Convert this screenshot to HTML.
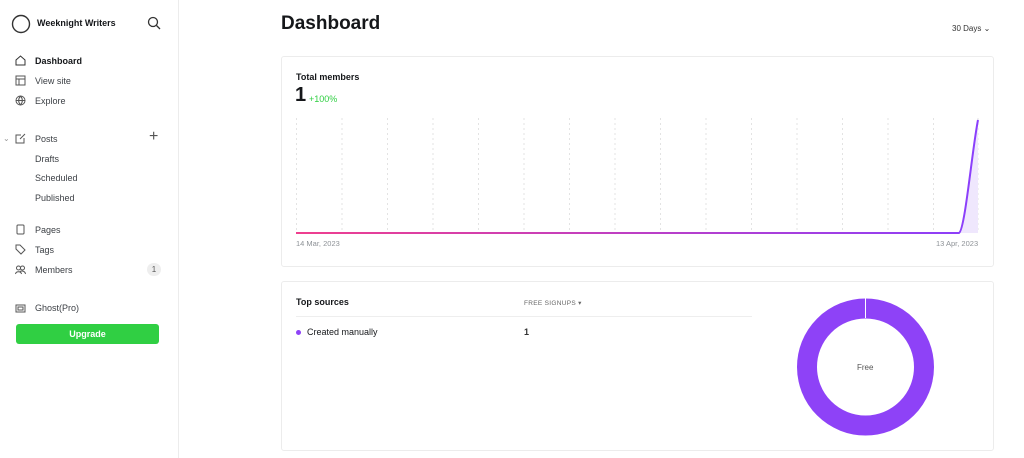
<!DOCTYPE html>
<html><head><style>
*{box-sizing:border-box;margin:0;padding:0}
body{width:1024px;height:458px;overflow:hidden;background:#fff;font-family:"Liberation Sans",sans-serif;color:#15171a;position:relative}
.sb{position:absolute;left:0;top:0;width:179px;height:458px;border-right:1px solid #ececec}
.t{position:absolute;font-size:9px;color:#3b3f44}
.ic{position:absolute}
.card{position:absolute;left:281px;width:713px;border:1px solid #ececec;border-radius:3px}
</style></head><body>
<div class="sb">
<svg class="ic" style="left:11px;top:14px" width="20" height="20"><circle cx="10" cy="10" r="8.5" fill="none" stroke="#333" stroke-width="1.4"/></svg>
<div class="t" style="left:37px;top:18px;font-weight:bold;color:#15171a">Weeknight Writers</div>
<svg class="ic" style="left:147px;top:16px" width="14" height="14"><circle cx="6" cy="6" r="4.5" fill="none" stroke="#333" stroke-width="1.3"/><path d="M9.5 9.5L13 13" stroke="#333" stroke-width="1.3"/></svg>
<svg class="ic" style="left:15px;top:55px" width="11" height="11"><path d="M1 10V5L5.5 1L10 5V10Z" fill="none" stroke="#333" stroke-width="1"/></svg>
<div class="t" style="left:35px;top:56px;font-weight:bold;color:#15171a">Dashboard</div>
<svg class="ic" style="left:15px;top:75px" width="11" height="11"><rect x="1" y="1" width="9" height="9" fill="none" stroke="#555"/><path d="M1 4H10M4 4V10" stroke="#555"/></svg>
<div class="t" style="left:35px;top:76px">View site</div>
<svg class="ic" style="left:15px;top:95px" width="11" height="11"><circle cx="5.5" cy="5.5" r="4.5" fill="none" stroke="#555"/><path d="M1 5.5H10M5.5 1C3 4 3 7 5.5 10M5.5 1C8 4 8 7 5.5 10" fill="none" stroke="#555"/></svg>
<div class="t" style="left:35px;top:96px">Explore</div>
<div class="t" style="left:3px;top:134px;color:#999;font-size:8px">⌄</div>
<svg class="ic" style="left:15px;top:133px" width="11" height="11"><path d="M6 2H1V10H9V5M5 6L10 1" fill="none" stroke="#555"/></svg>
<div class="t" style="left:35px;top:134px">Posts</div>
<div class="t" style="left:149px;top:128px;font-size:16px;color:#555">+</div>
<div class="t" style="left:35px;top:154px">Drafts</div>
<div class="t" style="left:35px;top:173px">Scheduled</div>
<div class="t" style="left:35px;top:193px">Published</div>
<svg class="ic" style="left:15px;top:224px" width="11" height="11"><rect x="2" y="1" width="7" height="9" rx="1" fill="none" stroke="#555"/></svg>
<div class="t" style="left:35px;top:225px">Pages</div>
<svg class="ic" style="left:15px;top:244px" width="11" height="11"><path d="M1 1H5L10 6L6 10L1 5Z" fill="none" stroke="#555"/></svg>
<div class="t" style="left:35px;top:245px">Tags</div>
<svg class="ic" style="left:15px;top:264px" width="11" height="11"><circle cx="3.5" cy="4" r="2" fill="none" stroke="#555"/><circle cx="7.5" cy="4" r="2" fill="none" stroke="#555"/><path d="M0.5 10C1 7 6 7 6.5 10M5 7.5C7 6.5 10 7 10.5 10" fill="none" stroke="#555"/></svg>
<div class="t" style="left:35px;top:265px">Members</div>
<div style="position:absolute;left:147px;top:263px;width:14px;height:13px;border-radius:7px;background:#eee;font-size:8px;text-align:center;line-height:13px;color:#555">1</div>
<svg class="ic" style="left:15px;top:303px" width="11" height="11"><rect x="1" y="2" width="9" height="7" fill="none" stroke="#555"/><rect x="3" y="4" width="5" height="3" fill="none" stroke="#555"/></svg>
<div class="t" style="left:35px;top:303px">Ghost(Pro)</div>
<div style="position:absolute;left:16px;top:324px;width:143px;height:20px;background:#30cf43;border-radius:3px;color:#fff;font-size:9px;font-weight:bold;text-align:center;line-height:20px">Upgrade</div>
</div>

<div style="position:absolute;left:281px;top:13px;font-size:19px;font-weight:bold">Dashboard</div>
<div style="position:absolute;left:952px;top:24px;font-size:8px;color:#333">30 Days ⌄</div>

<div class="card" style="top:56px;height:211px"></div>
<div style="position:absolute;left:296px;top:72px;font-size:9px;font-weight:bold">Total members</div>
<div style="position:absolute;left:295px;top:84px;font-size:20px;font-weight:bold">1</div>
<div style="position:absolute;left:309px;top:94px;font-size:9px;color:#30cf43">+100%</div>
<svg style="position:absolute;left:0;top:0" width="1024" height="458">
<defs><linearGradient id="g" x1="0" x2="1"><stop offset="0" stop-color="#ef3f8e"/><stop offset="1" stop-color="#8a3ffc"/></linearGradient></defs>
<g stroke="#ddd" stroke-dasharray="2,3" stroke-width="0.8">
<path d="M296.5 118V233M342 118V233M387.5 118V233M433 118V233M478.5 118V233M524 118V233M569.5 118V233M615 118V233M660.5 118V233M706 118V233M751.5 118V233M797 118V233M842.5 118V233M888 118V233M933.5 118V233M978 118V233"/></g>
<path d="M959 233C965 220 972 150 978 120V233Z" fill="#efe7fd"/>
<path d="M296 233H959C965 230 972 150 978 120" fill="none" stroke="url(#g)" stroke-width="2"/>
<circle cx="865.5" cy="367" r="58.5" fill="none" stroke="#8e42f7" stroke-width="20"/>
<path d="M865.5 298V318" stroke="#fff" stroke-width="1"/>
</svg>
<div style="position:absolute;left:296px;top:239px;font-size:7.5px;color:#8e9297">14 Mar, 2023</div>
<div style="position:absolute;left:936px;top:239px;font-size:7.5px;color:#8e9297">13 Apr, 2023</div>

<div class="card" style="top:281px;height:170px"></div>
<div style="position:absolute;left:296px;top:297px;font-size:9px;font-weight:bold">Top sources</div>
<div style="position:absolute;left:524px;top:299px;font-size:6.5px;color:#666;letter-spacing:.3px">FREE SIGNUPS ▾</div>
<div style="position:absolute;left:296px;top:316px;width:456px;height:1px;background:#eee"></div>
<div style="position:absolute;left:296px;top:330px;width:5px;height:5px;border-radius:50%;background:#8e42f7"></div>
<div style="position:absolute;left:307px;top:327px;font-size:9px;color:#15171a">Created manually</div>
<div style="position:absolute;left:524px;top:327px;font-size:9px;font-weight:bold;color:#333">1</div>
<div style="position:absolute;left:857px;top:363px;font-size:8px;color:#555">Free</div>
</body></html>
